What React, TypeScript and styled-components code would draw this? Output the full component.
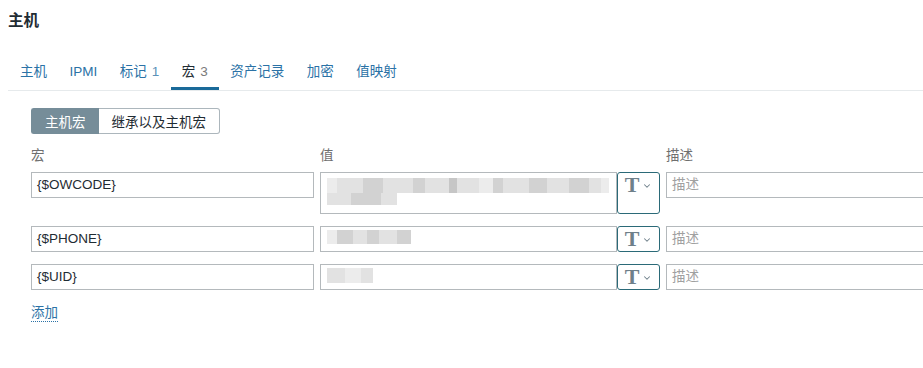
import React from 'react';
import styled, { createGlobalStyle } from 'styled-components';
import { ChevronDown } from 'lucide-react';

const GlobalStyle = createGlobalStyle`
  html, body {
    margin: 0;
    padding: 0;
    background: #ffffff;
    overflow: hidden;
  }
  body {
    font-family: "Liberation Sans", Arial, "Noto Sans CJK SC", sans-serif;
    font-size: 13.5px;
    color: #1f2c33;
  }
  * {
    box-sizing: border-box;
  }
`;

const Page = styled.div`
  width: 923px;
  height: 368px;
  padding: 11px 0 0 8px;
`;

const Title = styled.h1`
  margin: 0;
  font-size: 15.5px;
  line-height: 20px;
  font-weight: bold;
  color: #1f2c33;
`;

const TabList = styled.ul`
  display: flex;
  list-style: none;
  margin: 24px 0 0;
  padding: 0 0 0 1px;
  border-bottom: 1px solid #e6eaec;
`;

const Tab = styled.li<{ $active?: boolean }>`
  padding: 8px 11px 6px;
  line-height: 18px;
  font-size: 13.5px;
  white-space: nowrap;
  color: ${({ $active }) => ($active ? '#1f2c33' : '#2b72a6')};
  border-bottom: 3px solid ${({ $active }) => ($active ? '#1a6a99' : 'transparent')};
  & + & {
    margin-left: 0.5px;
  }
`;

const Count = styled.span<{ $active?: boolean }>`
  margin-left: 5px;
  color: ${({ $active }) => ($active ? '#7a7a7a' : '#5b91b8')};
`;

const Panel = styled.div`
  padding: 17px 0 0 23px;
`;

const Toggle = styled.div`
  display: flex;
`;

const ToggleButton = styled.button<{ $active?: boolean; $first?: boolean }>`
  height: 26px;
  padding: 0 13px;
  font-family: inherit;
  font-size: 13.5px;
  border: 1px solid ${({ $active }) => ($active ? '#768d99' : '#acb6bc')};
  ${({ $first }) => ($first ? 'border-right: none;' : 'border-left: none;')}
  border-radius: ${({ $first }) => ($first ? '3px 0 0 3px' : '0 3px 3px 0')};
  background: ${({ $active }) => ($active ? '#768d99' : '#ffffff')};
  color: ${({ $active }) => ($active ? '#ffffff' : '#1f2c33')};
`;

const Columns = styled.div`
  display: grid;
  grid-template-columns: 283px 340px 283px;
  column-gap: 6px;
`;

const HeadRow = styled(Columns)`
  margin-top: 13px;
  margin-bottom: 7px;
`;

const HeadLabel = styled.div`
  line-height: 18px;
  color: #6f6f6f;
`;

const Rows = styled.div`
  display: flex;
  flex-direction: column;
  gap: 12px;
`;

const Input = styled.div<{ $placeholder?: boolean }>`
  height: 26px;
  line-height: 24px;
  padding: 0 5px;
  border: 1px solid #b4b9bc;
  color: ${({ $placeholder }) => ($placeholder ? '#a0a0a0' : '#1f2c33')};
  white-space: nowrap;
  overflow: hidden;
`;

const ValueField = styled.div`
  display: flex;
  align-items: stretch;
`;

const ValueBox = styled.div<{ $tall?: boolean }>`
  flex: 1;
  height: ${({ $tall }) => ($tall ? '42px' : '26px')};
  border: 1px solid #b4b9bc;
  padding: ${({ $tall }) => ($tall ? '5px 0 0 6px' : '3px 0 0 6px')};
`;

const BlurLine = styled.div`
  display: flex;
`;

const Blur = styled.span<{ $w: number; $h: number; $shade: string }>`
  display: block;
  width: ${({ $w }) => $w}px;
  height: ${({ $h }) => $h}px;
  background: ${({ $shade }) => $shade};
`;

const TypeButton = styled.div`
  width: 43px;
  height: 100%;
  border: 1px solid #2b6a78;
  border-radius: 3px;
  display: flex;
  align-items: flex-start;
  justify-content: center;
  gap: 3px;
  color: #6f808a;
`;

const TypeGlyph = styled.span`
  font-family: "Liberation Serif", "DejaVu Serif", serif;
  font-weight: bold;
  font-size: 22px;
  line-height: 24px;
`;

const TypeChevron = styled.span`
  display: flex;
  height: 24px;
  align-items: center;
  padding-top: 1px;
`;

const AddLink = styled.a`
  display: inline-block;
  margin-top: 15px;
  line-height: 16px;
  color: #2b72a6;
  border-bottom: 1px dotted #2b72a6;
  text-decoration: none;
`;

type Seg = [number, string];

const G1 = '#d2d2d2';
const G2 = '#e2e2e2';
const G3 = '#ececec';
const G4 = '#c6c6c6';

const values: { tall: boolean; lines: { h: number; segs: Seg[] }[] }[] = [
  {
    tall: true,
    lines: [
      {
        h: 15,
        segs: [
          [10, G3], [26, G2], [20, G1], [30, G2], [12, G1], [24, G2], [8, G4],
          [22, G2], [14, G3], [10, G1], [26, G2], [18, G1], [22, G2], [20, G1], [12, G2], [8, G3],
        ],
      },
      { h: 12, segs: [[24, G2], [30, G1], [16, G2]] },
    ],
  },
  {
    tall: false,
    lines: [{ h: 14, segs: [[10, G3], [16, G1], [14, G2], [12, G1], [18, G2], [14, G1]] }],
  },
  {
    tall: false,
    lines: [{ h: 15, segs: [[18, G2], [16, G3], [12, G2]] }],
  },
];

const macros = ['{$OWCODE}', '{$PHONE}', '{$UID}'];

const tabs: { label: string; count?: number; active?: boolean }[] = [
  { label: '主机' },
  { label: 'IPMI' },
  { label: '标记', count: 1 },
  { label: '宏', count: 3, active: true },
  { label: '资产记录' },
  { label: '加密' },
  { label: '值映射' },
];

export default function App() {
  return (
    <>
      <GlobalStyle />
      <Page>
        <Title>主机</Title>
        <TabList>
          {tabs.map((t) => (
            <Tab key={t.label} $active={t.active}>
              {t.label}
              {t.count !== undefined && <Count $active={t.active}>{t.count}</Count>}
            </Tab>
          ))}
        </TabList>

        <Panel>
          <Toggle>
            <ToggleButton $active $first>主机宏</ToggleButton>
            <ToggleButton>继承以及主机宏</ToggleButton>
          </Toggle>

          <HeadRow>
            <HeadLabel>宏</HeadLabel>
            <HeadLabel>值</HeadLabel>
            <HeadLabel>描述</HeadLabel>
          </HeadRow>

          <Rows>
            {macros.map((m, i) => (
              <Columns key={m}>
                <Input>{m}</Input>
                <ValueField>
                  <ValueBox $tall={values[i].tall}>
                    {values[i].lines.map((line, li) => (
                      <BlurLine key={li}>
                        {line.segs.map(([w, c], si) => (
                          <Blur key={si} $w={w} $h={line.h} $shade={c} />
                        ))}
                      </BlurLine>
                    ))}
                  </ValueBox>
                  <TypeButton>
                    <TypeGlyph>T</TypeGlyph>
                    <TypeChevron>
                      <ChevronDown size={10} strokeWidth={2.5} />
                    </TypeChevron>
                  </TypeButton>
                </ValueField>
                <Input $placeholder>描述</Input>
              </Columns>
            ))}
          </Rows>

          <AddLink href="#">添加</AddLink>
        </Panel>
      </Page>
    </>
  );
}
